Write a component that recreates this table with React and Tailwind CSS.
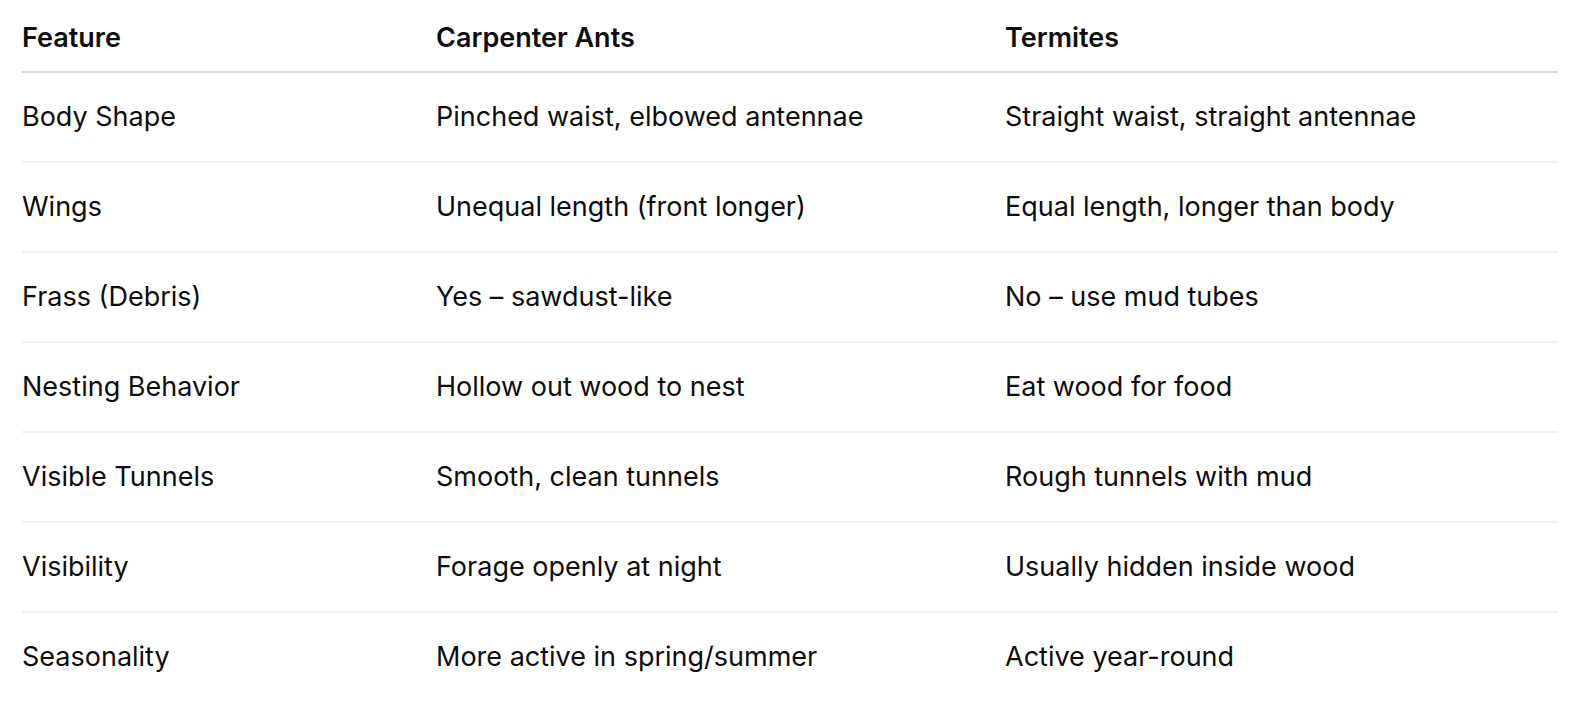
import React from "react";

const rows = [
  ["Body Shape", "Pinched waist, elbowed antennae", "Straight waist, straight antennae"],
  ["Wings", "Unequal length (front longer)", "Equal length, longer than body"],
  ["Frass (Debris)", "Yes – sawdust-like", "No – use mud tubes"],
  ["Nesting Behavior", "Hollow out wood to nest", "Eat wood for food"],
  ["Visible Tunnels", "Smooth, clean tunnels", "Rough tunnels with mud"],
  ["Visibility", "Forage openly at night", "Usually hidden inside wood"],
  ["Seasonality", "More active in spring/summer", "Active year-round"],
];

const App = () => {
  return (
    <div className="w-[1576px] h-[706px] bg-white px-[22px] font-['Inter',sans-serif] text-[#0d0d0d]">
      <table className="w-[1536px] border-collapse text-left text-[27px]">
        <thead>
          <tr className="h-[72px] border-b-2 border-[#dadada]">
            <th className="w-[414px] font-semibold pt-[5px]">Feature</th>
            <th className="w-[569px] font-semibold pt-[5px]">Carpenter Ants</th>
            <th className="font-semibold pt-[5px]">Termites</th>
          </tr>
        </thead>
        <tbody>
          {rows.map((r, i) => (
            <tr
              key={r[0]}
              className={
                i < rows.length - 1
                  ? "h-[90px] border-b-2 border-[#f1f1f1]"
                  : "h-[90px]"
              }
            >
              <td className="font-normal">{r[0]}</td>
              <td className="font-normal">{r[1]}</td>
              <td className="font-normal">{r[2]}</td>
            </tr>
          ))}
        </tbody>
      </table>
    </div>
  );
};

export default App;
